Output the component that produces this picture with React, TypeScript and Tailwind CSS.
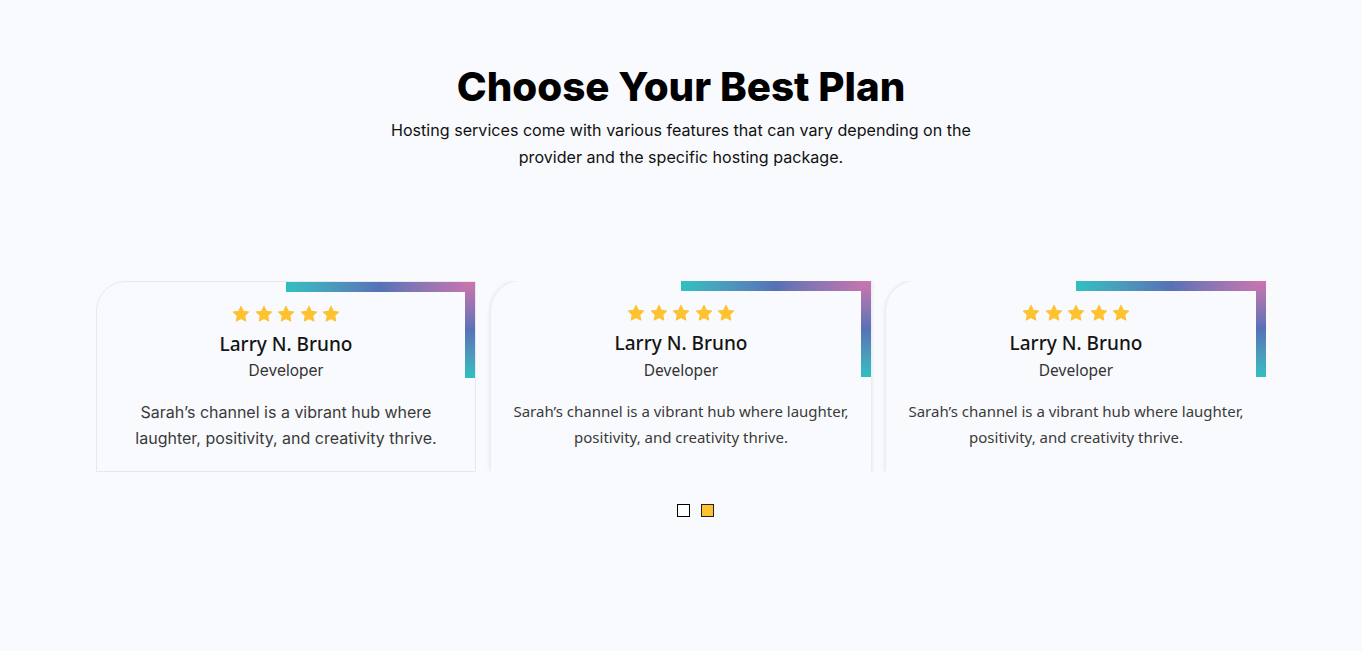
import type { ReactNode } from 'react'

const reviews = [
  { faded: false },
  { faded: true },
  { faded: true },
]

function Star() {
  return (
    <svg viewBox="0 0 24 24" className="h-[18px] w-[18px]" fill="#fec230">
      <path d="M12 1.8l3.1 6.6 7.1.9-5.2 4.9 1.3 7.1L12 17.9l-6.3 3.4 1.3-7.1L1.8 9.3l7.1-.9z" strokeLinejoin="round" stroke="#fec230" strokeWidth="1.4" />
    </svg>
  )
}

function Stars() {
  return (
    <div className="flex h-5 items-center justify-center gap-[4.5px]">
      {[0, 1, 2, 3, 4].map((i) => (
        <Star key={i} />
      ))}
    </div>
  )
}

function Corner() {
  return (
    <>
      <span className="absolute right-0 top-0 h-[10px] w-1/2 bg-gradient-to-r from-[#2ec0c0] via-[#5671b7] to-[#cc74ad]" />
      <span className="absolute right-0 top-0 h-[96px] w-[10px] bg-gradient-to-b from-[#cc74ad] via-[#5671b7] to-[#2ec0c0]" />
    </>
  )
}

function ReviewCard({ faded, children }: { faded: boolean; children?: ReactNode }) {
  const sans = faded
    ? "font-['Noto_Sans',sans-serif]"
    : "font-['Inter',sans-serif]"
  return (
    <div
      className={`relative h-[191px] rounded-tl-[30px] bg-[#f9fafd] px-5 pt-[22px] text-center ${
        faded
          ? 'shadow-[0_0_5px_rgba(0,0,0,0.13)]'
          : 'border border-[#e6e8ec]'
      }`}
    >
      <Corner />
      <Stars />
      <h3 className="mt-[6px] font-['Noto_Sans',sans-serif] text-[19px] font-medium leading-7 text-[#141414]">
        Larry N. Bruno
      </h3>
      <p className={`${sans} mt-[1px] text-[15.5px] leading-6 text-[#333]`}>Developer</p>
      <p
        className={`${sans} mx-auto mt-[16px] leading-[26px] text-[#3a3a3a] ${
          faded ? 'text-[15px]' : 'max-w-[310px] text-[16px]'
        }`}
      >
        Sarah’s channel is a vibrant hub where laughter, positivity, and creativity thrive.
      </p>
      {children}
    </div>
  )
}

export default function App() {
  return (
    <div className="min-h-[651px] bg-[#f9fafd] pt-[63px] font-['Inter',sans-serif]">
      <div className="text-center">
        <h1 className="text-[40.3px] font-extrabold leading-[48px] text-black">
          Choose Your Best Plan
        </h1>
        <p className="mx-auto mt-[6px] max-w-[600px] text-[16.1px] leading-[27px] text-[#111]">
          Hosting services come with various features that can vary depending on the provider and the specific hosting package.
        </p>
      </div>

      <div className="mx-auto mt-[110px] h-[191px] w-[1170px] overflow-hidden">
        <div className="grid grid-cols-3 gap-[15px]">
          {reviews.map((r, i) => (
            <ReviewCard key={i} faded={r.faded} />
          ))}
        </div>
      </div>

      <div className="mt-[32px] flex justify-center gap-[11px] pl-[29px]">
        <span className="h-[13px] w-[13px] border-[1.5px] border-black bg-white" />
        <span className="h-[13px] w-[13px] border-[1.5px] border-[#222] bg-[#fec230]" />
      </div>
    </div>
  )
}
